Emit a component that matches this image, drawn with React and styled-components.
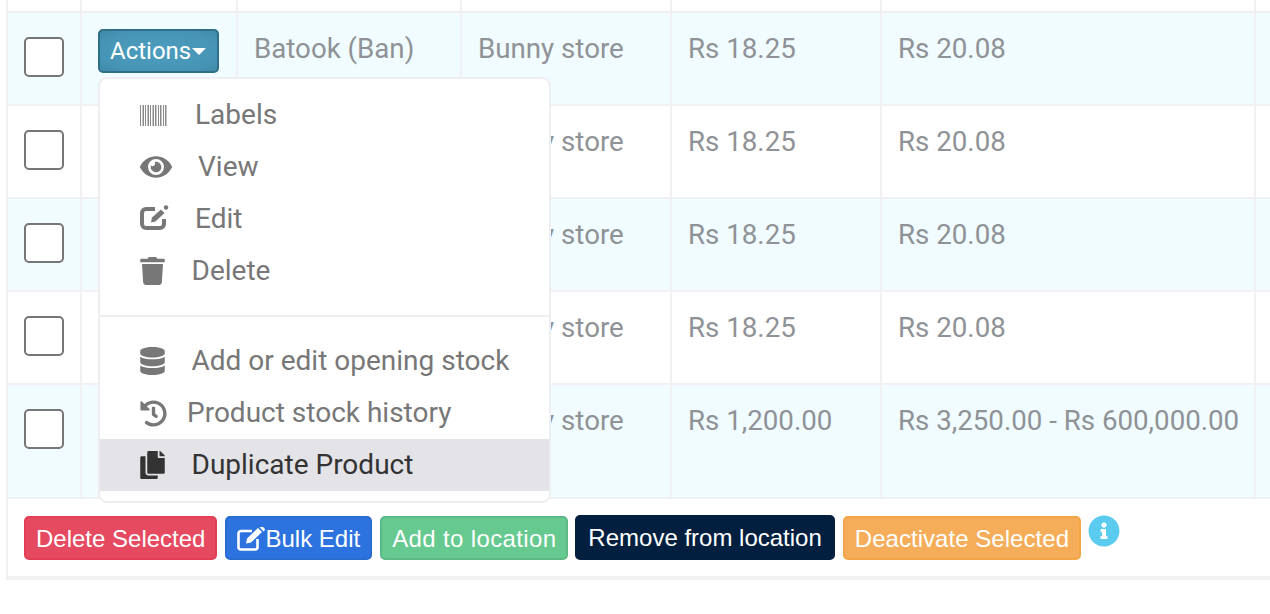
import React from 'react';
import styled, { createGlobalStyle } from 'styled-components';
import { FaEye, FaTrash, FaDatabase, FaHistory, FaCopy, FaInfoCircle } from 'react-icons/fa';

const GlobalStyle = createGlobalStyle`
  html, body {
    margin: 0;
    padding: 0;
    background: #fff;
    font-family: Roboto, sans-serif;
  }
`;

const Page = styled.div`
  width: 1264px;
  margin-left: 6px;
  height: 614px;
  overflow: hidden;
`;

const Table = styled.div`
  border-left: 2px solid #f1f1f3;
`;

const Row = styled.div`
  display: grid;
  grid-template-columns: 74px 156px 224px 210px 210px 374px 14px;
  height: ${(p) => p.$height}px;
  background: ${(p) => (p.$striped ? '#f0fcff' : '#fff')};
  border-bottom: 2px solid #f1f1f3;
`;

const Cell = styled.div`
  border-right: 2px solid #f1f1f3;
  padding: 20px 0 0 16px;
  font-size: 27.7px;
  line-height: 32px;
  color: #8f9296;
  white-space: nowrap;
  position: relative;
`;

const CheckCell = styled(Cell)`
  padding: 24px 0 0 16px;
`;

const Check = styled.div`
  width: 40px;
  height: 40px;
  box-sizing: border-box;
  border: 2px solid #767676;
  border-radius: 5px;
  background: #fff;
`;

const ActionCell = styled(Cell)`
  padding: 16px 0 0 16px;
`;

const ActionsButton = styled.button`
  display: flex;
  align-items: center;
  width: 121px;
  height: 44px;
  box-sizing: border-box;
  padding: 0 0 0 10px;
  border: 2px solid #2f6f88;
  border-radius: 5px;
  background: radial-gradient(ellipse at center, #4c9dbf 0%, #4795b6 70%, #408aa9 100%);
  color: #fff;
  font-family: Roboto, sans-serif;
  font-size: 24px;
`;

const Caret = styled.span`
  width: 0;
  height: 0;
  margin-left: 1px;
  border-left: 7px solid transparent;
  border-right: 7px solid transparent;
  border-top: 7px solid #fff;
`;

const Menu = styled.div`
  position: absolute;
  z-index: 5;
  left: 16px;
  top: 64px;
  width: 453px;
  height: 426px;
  box-sizing: border-box;
  padding: 10px 0;
  background: #fff;
  border: 2px solid #eeeef0;
  border-radius: 9px;
`;

const MenuItem = styled.div`
  display: flex;
  align-items: center;
  gap: ${(p) => p.$gap}px;
  height: 52px;
  padding-left: 40px;
  font-size: 28px;
  color: ${(p) => (p.$active ? '#333' : '#777')};
  background: ${(p) => (p.$active ? '#e3e3e8' : 'transparent')};
`;

const MenuIcon = styled.span`
  display: flex;
  justify-content: center;
  width: ${(p) => p.$width}px;
  font-size: ${(p) => p.$size}px;
`;

const Divider = styled.div`
  height: 2px;
  margin: 18px 0 18px;
  background: #eeeef0;
`;

const Footer = styled.div`
  display: flex;
  align-items: flex-start;
  height: 81px;
  box-sizing: border-box;
  padding: 16px 0 0 16px;
  border-left: 2px solid #f1f1f3;
  border-bottom: 4px solid #f1f1f3;
`;

const BulkButton = styled.button`
  display: flex;
  align-items: center;
  height: 44px;
  margin-top: 1px;
  margin-right: 8px;
  box-sizing: border-box;
  padding: 1px 10px 0;
  border: 2px solid ${(p) => p.$border};
  border-radius: 5px;
  background: ${(p) => p.$bg};
  color: #fff;
  font-family: 'Liberation Sans', Arial, sans-serif;
  font-size: 24px;
  letter-spacing: ${(p) => p.$spacing || 0}px;
  white-space: nowrap;
`;

const DarkButton = styled(BulkButton)`
  height: 45px;
  margin-top: 0;
  margin-left: -1px;
  padding: 1px 11px 0;
`;

const InfoIcon = styled.span`
  display: flex;
  margin-left: -1px;
  font-size: 32px;
  color: #5bcbef;
`;

function Barcode() {
  const bars = [0, 2, 3, 5, 7, 8, 10, 12, 13, 15, 16, 18, 20, 21, 23, 25, 26];
  return (
    <svg width="28" height="21" viewBox="0 0 28 21">
      {bars.map((x, i) => (
        <rect key={x} x={x} y="0" width="1" height="21" fill={i % 3 === 1 ? '#c4c4c4' : '#8a8a8a'} />
      ))}
    </svg>
  );
}

function EditMark() {
  return (
    <svg width="29" height="28" viewBox="0 0 29 28" fill="none" stroke="currentColor">
      <path d="M15 4H6a4 4 0 0 0-4 4V19a4 4 0 0 0 4 4H20a4 4 0 0 0 4-4V14" strokeWidth="4" />
      <path d="M11 17.5l1-5 9-8 3.5 3.5-9 8.5z" fill="currentColor" stroke="none" />
      <circle cx="26" cy="2.5" r="2.2" fill="currentColor" stroke="none" />
    </svg>
  );
}

function BulkEditMark() {
  return (
    <svg width="28" height="24" viewBox="0 0 28 24" fill="none" stroke="currentColor">
      <path d="M15 4H4a2.5 2.5 0 0 0-2.5 2.5V20A2.5 2.5 0 0 0 4 22.5H18A2.5 2.5 0 0 0 20.5 20V12" strokeWidth="2.6" />
      <path d="M9 16.5l1-5L21 1l4 4-11 10.5zM22.5 0l1-0.5a1.5 1.5 0 0 1 2 0l2 2a1.5 1.5 0 0 1 0 2l-1 1z" fill="currentColor" stroke="none" />
    </svg>
  );
}

// only the first row's name shows, the open menu covers the others
const rows = [
  { height: 91, striped: true, name: 'Batook (Ban)', price: 'Rs 18.25', sell: 'Rs 20.08' },
  { height: 91, price: 'Rs 18.25', sell: 'Rs 20.08' },
  { height: 91, striped: true, price: 'Rs 18.25', sell: 'Rs 20.08' },
  { height: 91, price: 'Rs 18.25', sell: 'Rs 20.08' },
  { height: 112, striped: true, price: 'Rs 1,200.00', sell: 'Rs 3,250.00 - Rs 600,000.00' },
];

const topItems = [
  { label: 'Labels', width: 28, size: 28, gap: 27, icon: <Barcode /> },
  { label: 'View', width: 32, size: 32, gap: 26, icon: <FaEye /> },
  { label: 'Edit', width: 29, size: 28, gap: 26, icon: <EditMark /> },
  { label: 'Delete', width: 25, size: 28, gap: 26.5, icon: <FaTrash /> },
];

const bottomItems = [
  { label: 'Add or edit opening stock', width: 25, size: 28, gap: 26.5, icon: <FaDatabase /> },
  { label: 'Product stock history', width: 27, size: 27, gap: 20, icon: <FaHistory /> },
  { label: 'Duplicate Product', width: 25, size: 28, gap: 26.5, icon: <FaCopy />, active: true },
];

const renderItem = (item) => (
  <MenuItem key={item.label} $active={item.active} $gap={item.gap}>
    <MenuIcon $width={item.width} $size={item.size}>{item.icon}</MenuIcon>
    {item.label}
  </MenuItem>
);

export default function App() {
  return (
    <Page>
      <GlobalStyle />
      <Table>
        <Row $height={11}>
          <Cell /><Cell /><Cell /><Cell /><Cell /><Cell /><div />
        </Row>
        {rows.map((row, i) => (
          <Row key={i} $height={row.height} $striped={row.striped}>
            <CheckCell><Check /></CheckCell>
            <ActionCell>
              {i === 0 && (
                <>
                  <ActionsButton>Actions<Caret /></ActionsButton>
                  <Menu>
                    {topItems.map(renderItem)}
                    <Divider />
                    {bottomItems.map(renderItem)}
                  </Menu>
                </>
              )}
            </ActionCell>
            <Cell>{row.name}</Cell>
            <Cell>Bunny store</Cell>
            <Cell>{row.price}</Cell>
            <Cell>{row.sell}</Cell>
            <div />
          </Row>
        ))}
      </Table>
      <Footer>
        <BulkButton $bg="#e54a60" $border="#e23f57">Delete Selected</BulkButton>
        <BulkButton $bg="#2c73e0" $border="#2a6ccf"><BulkEditMark />Bulk Edit</BulkButton>
        <BulkButton $bg="#66c98f" $border="#5cb985" $spacing={0.36}>Add to location</BulkButton>
        <DarkButton $bg="#021f3f" $border="#021f3f">Remove from location</DarkButton>
        <BulkButton $bg="#f5ad59" $border="#f3a548" $spacing={0.04}>Deactivate Selected</BulkButton>
        <InfoIcon><FaInfoCircle /></InfoIcon>
      </Footer>
    </Page>
  );
}
